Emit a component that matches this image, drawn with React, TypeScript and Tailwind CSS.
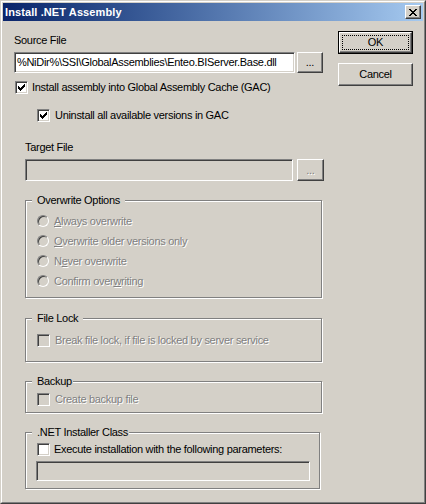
import React from "react";

const sunken =
  "border border-t-[#808080] border-l-[#808080] border-r-white border-b-white shadow-[inset_1px_1px_0_#404040,inset_-1px_-1px_0_#d4d0c8]";
const raised =
  "border border-t-white border-l-white border-r-[#404040] border-b-[#404040] shadow-[inset_-1px_-1px_0_#808080]";
const dimText = "text-[#808080] [text-shadow:1px_1px_0_#fff]";

function CheckMark() {
  // classic 7x7 check glyph, one 3px column per x
  const tops = [2, 3, 4, 3, 2, 1, 0];
  return (
    <svg width="7" height="7" viewBox="0 0 7 7" shapeRendering="crispEdges">
      {tops.map((t, i) => (
        <rect key={i} x={i} y={t} width="1" height="3" fill="#000" />
      ))}
    </svg>
  );
}

function CheckBox({ checked, disabled }: { checked?: boolean; disabled?: boolean }) {
  return (
    <div
      className={`${sunken} w-[13px] h-[13px] shrink-0 flex items-center justify-center ${
        disabled ? "bg-[#d4d0c8]" : "bg-white"
      }`}
    >
      {checked && <CheckMark />}
    </div>
  );
}

function Radio() {
  return (
    <div className="w-[12px] h-[12px] shrink-0 rounded-full border border-t-[#808080] border-l-[#808080] border-r-white border-b-white bg-[#d4d0c8] shadow-[inset_1px_1px_0_#404040,inset_-1px_-1px_0_#d4d0c8]" />
  );
}

function CloseGlyph() {
  const rows = [
    [0, 1, 6, 7],
    [1, 2, 5, 6],
    [2, 3, 4, 5],
    [3, 4],
    [2, 3, 4, 5],
    [1, 2, 5, 6],
    [0, 1, 6, 7],
  ];
  return (
    <svg width="8" height="7" viewBox="0 0 8 7" shapeRendering="crispEdges">
      {rows.map((cols, y) =>
        cols.map((x) => <rect key={`${x}-${y}`} x={x} y={y} width="1" height="1" fill="#000" />)
      )}
    </svg>
  );
}

function Group({
  title,
  className,
  legendClass,
  children,
}: {
  title: string;
  className: string;
  legendClass?: string;
  children: React.ReactNode;
}) {
  return (
    <div
      className={`relative border border-[#808080] shadow-[1px_1px_0_#fff,inset_1px_1px_0_#fff] ${className}`}
    >
      <span
        className={`absolute -top-[7px] left-[6px] bg-[#d4d0c8] leading-[13px] text-black pl-[5px] ${
          legendClass ?? "pr-[5px]"
        }`}
      >
        {title}
      </span>
      {children}
    </div>
  );
}

export default function App() {
  return (
    <div
      className="w-[426px] h-[504px] border border-t-[#d4d0c8] border-l-[#d4d0c8] border-r-[#404040] border-b-[#404040] bg-[#d4d0c8] text-[11px] leading-[13px] tracking-[-0.3px] text-black"
      style={{ fontFamily: '"Liberation Sans", Arial, sans-serif' }}
    >
      <div className="w-full h-full border border-t-white border-l-white border-r-[#808080] border-b-[#808080] p-px flex flex-col">
        {/* title bar */}
        <div className="h-[18px] flex items-center justify-between bg-gradient-to-r from-[#0a246a] to-[#a6caf0] pl-[2px] pr-[2px]">
          <span className="text-white font-bold text-[11px] leading-[13px] tracking-[0.1px]">Install .NET Assembly</span>
          <div className={`${raised} w-[16px] h-[14px] bg-[#d4d0c8] flex items-center justify-center`}>
            <CloseGlyph />
          </div>
        </div>

        <div className="flex pl-[11px]">
          {/* left column */}
          <div className="w-[310px] flex flex-col">
            <div className="mt-[13px] h-[13px]">Source File</div>
            <div className="mt-[5px] flex h-[21px]">
              <div
                className={`${sunken} w-[281px] bg-white pl-[2px] flex items-center overflow-hidden whitespace-nowrap`}
              >
                %NiDir%\SSI\GlobalAssemblies\Enteo.BIServer.Base.dll
              </div>
              <div className={`${raised} ml-[2px] w-[26px] flex items-center justify-center`}>...</div>
            </div>

            <div className="mt-[8px] ml-px flex items-center gap-[4px] h-[13px]">
              <CheckBox checked />
              <span>Install assembly into Global Assembly Cache (GAC)</span>
            </div>
            <div className="mt-[15px] ml-[23px] flex items-center gap-[5px] h-[13px]">
              <CheckBox checked />
              <span>Uninstall all available versions in GAC</span>
            </div>

            <div className="mt-[19px] ml-[11px] h-[13px]">Target File</div>
            <div className="mt-[5px] ml-[11px] flex h-[22px]">
              <div className={`${sunken} w-[268px] bg-[#d4d0c8]`} />
              <div className={`${raised} ml-[4px] w-[27px] flex items-center justify-center ${dimText}`}>
                ...
              </div>
            </div>

            <Group title="Overwrite Options" className="mt-[19px] ml-[11px] w-[297px] h-[98px] pt-[10px] pl-[11px]">
              <div className={`flex flex-col ${dimText}`}>
                <div className="h-[20px] flex items-center gap-[5px]">
                  <Radio />
                  <span>
                    <u>A</u>lways overwrite
                  </span>
                </div>
                <div className="h-[20px] flex items-center gap-[5px]">
                  <Radio />
                  <span>
                    <u>O</u>verwrite older versions only
                  </span>
                </div>
                <div className="h-[20px] flex items-center gap-[5px]">
                  <Radio />
                  <span>
                    N<u>e</u>ver overwrite
                  </span>
                </div>
                <div className="h-[20px] flex items-center gap-[5px]">
                  <Radio />
                  <span>
                    Confirm over<u>w</u>riting
                  </span>
                </div>
              </div>
            </Group>

            <Group title="File Lock" className="mt-[20px] ml-[11px] w-[297px] h-[44px] pt-[15px] pl-[11px]">
              <div className={`flex items-center gap-[5px] h-[13px] ${dimText}`}>
                <CheckBox disabled />
                <span>Break file lock, if file is locked by server service</span>
              </div>
            </Group>

            <Group
              title="Backup"
              legendClass="pr-[1px]"
              className="mt-[19px] ml-[11px] w-[297px] h-[32px] pt-[11px] pl-[11px]"
            >
              <div className={`flex items-center gap-[5px] h-[13px] ${dimText}`}>
                <CheckBox disabled />
                <span>Create backup file</span>
              </div>
            </Group>

            <Group
              title=".NET Installer Class"
              legendClass="pr-[1px]"
              className="mt-[19px] ml-[11px] w-[295px] h-[57px] pt-[10px] pl-[10px]"
            >
              <div className="ml-px flex items-center gap-[4px] h-[13px]">
                <CheckBox />
                <span>Execute installation with the following parameters:</span>
              </div>
              <div className={`${sunken} mt-[5px] w-[274px] h-[20px] bg-[#d4d0c8]`} />
            </Group>
          </div>

          {/* right column */}
          <div className="ml-[14px] mt-[10px] flex flex-col gap-[9px]">
            <div className="w-[75px] h-[23px] border border-black">
              <div className={`${raised} w-full h-full p-[2px]`}>
                <div className="w-full h-full border border-dotted border-black flex items-center justify-center">
                  OK
                </div>
              </div>
            </div>
            <div className={`${raised} w-[75px] h-[23px] flex items-center justify-center`}>Cancel</div>
          </div>
        </div>
      </div>
    </div>
  );
}
